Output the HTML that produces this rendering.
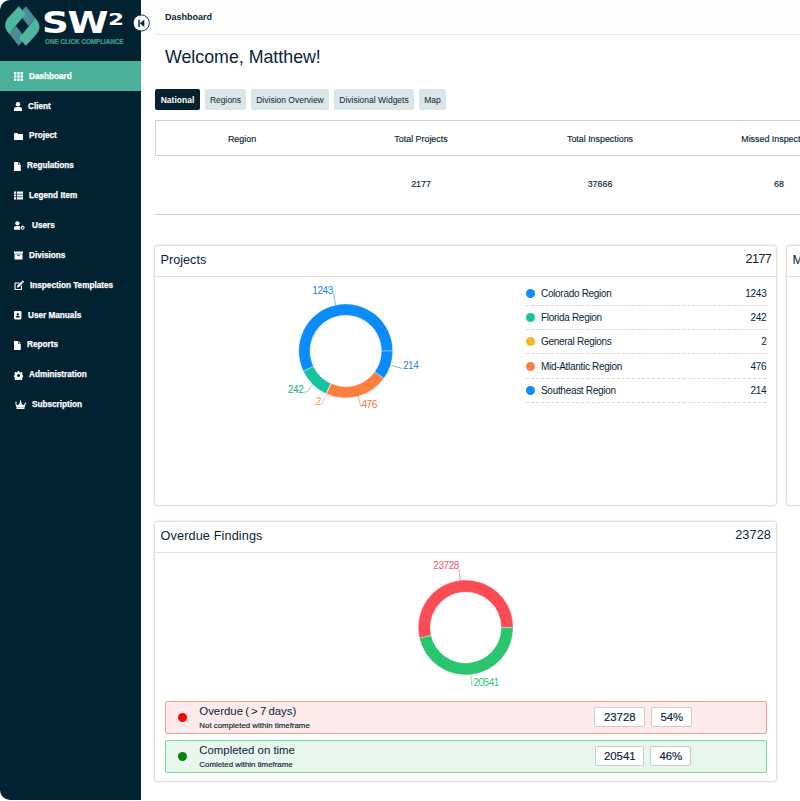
<!DOCTYPE html>
<html lang="en">
<head>
<meta charset="utf-8">
<title>Dashboard</title>
<style>
*{box-sizing:border-box;margin:0;padding:0}
html,body{width:800px;height:801px;overflow:hidden;background:#fff}
body{font-family:"Liberation Sans",sans-serif;color:#0b2434;position:relative}
.abs{position:absolute}
#side{position:absolute;left:0;top:0;width:141px;height:800px;background:#022232;border-radius:10px 0 0 10px}
#topbar{position:absolute;left:141px;top:0;width:659px;height:34px;background:#fefefd}
#topline{position:absolute;left:155px;top:34px;width:645px;height:1px;background:#e6e6e4}
.mi{position:absolute;left:0;width:141px;height:30px;color:#fff;font-weight:bold;font-size:8.200px;line-height:30px}
.mi.act{background:#4bb09a}
.mi span{position:absolute;top:.800px;white-space:nowrap;-webkit-text-stroke:.25px #fff}
.mi svg{position:absolute;left:14px;top:11px;width:9px;height:9px;fill:#fff}
.tab{position:absolute;top:89px;height:21px;background:#dbe6e8;border-radius:2px;font-size:8.5px;line-height:23px;text-align:center;color:#0b2434;white-space:nowrap}
.tab.on{background:#062230;color:#fff;font-weight:bold}
.th{position:absolute;font-size:8.900px;-webkit-text-stroke:.15px #0b2434;white-space:nowrap;transform:translateX(-50%);color:#0b2434}
.card{position:absolute;background:#fff;border-radius:3px;box-shadow:0 0 2px 1px rgba(0,0,0,.17)}
.card .hd{position:absolute;left:0;right:0;top:0;height:31.500px;border-bottom:1px solid #e4e4e4}
.card .hd .t{position:absolute;left:5.500px;top:0;line-height:28px;font-size:12.700px}
.card .hd .v{position:absolute;right:5px;top:0;line-height:27.400px;font-size:12.700px;letter-spacing:-.7px}
.lg{position:absolute;left:371px;width:240.400px;height:24px;border-bottom:1px dashed #d9d9d9;font-size:10px;letter-spacing:-.3px;line-height:24px}
.lg i{position:absolute;left:0;top:7px;width:9px;height:9px;border-radius:50%}
.lg b{position:absolute;left:15px;font-weight:normal}
.lg em{position:absolute;right:0;font-style:normal}

.row{position:absolute;left:10.300px;width:601.700px;height:33px;border:1px solid;border-radius:2px}
.row.red{background:#fdeaea;border-color:#ee9c9c}
.row.grn{background:#e8f7ee;border-color:#7dd6a2}
.row i{position:absolute;left:12px;top:11px;width:9px;height:9px;border-radius:50%}
.row.red i{background:#f00}
.row.grn i{background:#0a800a}
.row .a{position:absolute;left:33px;top:1px;font-size:11.400px;line-height:16px;white-space:nowrap}
.row .s{position:absolute;left:33px;top:19px;-webkit-text-stroke:.15px #0b2434;font-size:7.900px;line-height:10px;white-space:nowrap}
.row .bx{position:absolute;top:5px;height:20px;background:#fff;border:1px solid #ccc;border-radius:2px;font-size:11.400px;-webkit-text-stroke:.15px #0b2434;line-height:18px;text-align:center}
</style>
</head>
<body>
<div id="side">
  <svg class="abs" style="left:0;top:0" width="141" height="60" viewBox="0 0 141 60">
    <g>
      <polygon points="26,6.2 35.6,18.6 28.6,26 19,14" fill="#4a8d97"/>
      <polygon points="18.6,45.8 9,33.4 16,26 25.6,38" fill="#4a8d97"/>
      <path d="M18.8,6.2 L25.6,14.0 L9.1,33.8 C6.3,30.5 4.9,27.5 5.1,25.0 C5.3,21.5 7.0,19.0 9.2,16.6 Z" fill="#4db79f"/>
      <path d="M25.8,45.8 L19.0,38.0 L35.5,18.2 C38.3,21.5 39.7,24.5 39.5,27.0 C39.3,30.5 37.6,33.0 35.4,35.4 Z" fill="#4db79f"/>
    </g>
  </svg>
  <div class="abs" id="sw" style="left:42.300px;top:1.500px;font-family:'DejaVu Sans','Liberation Sans',sans-serif;font-size:31px;font-weight:bold;color:#fff;line-height:40px;transform-origin:0 0;transform:scaleX(1.2);white-space:nowrap;letter-spacing:-1px">SW</div>
  <div class="abs" id="sw2" style="left:108px;top:9.700px;font-family:'DejaVu Sans','Liberation Sans',sans-serif;font-size:15.400px;font-weight:bold;color:#fff;line-height:20px;transform-origin:0 0;transform:scaleX(1.5)">2</div>
  <div class="abs" id="tag" style="left:45px;top:36.500px;-webkit-text-stroke:.2px #3f9d8c;font-size:6.3px;font-weight:bold;color:#3f9d8c;line-height:10px;letter-spacing:0px;white-space:nowrap">ONE CLICK COMPLIANCE</div>

  <div class="mi act" style="top:61.00px;height:30.400px"><svg viewBox="0 0 9 9"><path d="M0,0h2.4v2.4h-2.4zM3.3,0h2.4v2.4h-2.4zM6.6,0h2.4v2.4h-2.4zM0,3.3h2.4v2.4h-2.4zM3.3,3.3h2.4v2.4h-2.4zM6.6,3.3h2.4v2.4h-2.4zM0,6.6h2.4v2.4h-2.4zM3.3,6.6h2.4v2.4h-2.4zM6.6,6.6h2.4v2.4h-2.4z"/></svg><span style="left:29px">Dashboard</span></div>
  <div class="mi" style="top:90.85px"><svg viewBox="0 0 9 9"><circle cx="4" cy="2.3" r="2.2"/><path d="M0,9 V7.4 C0,5.8 1.3,5 2.6,5 H5.4 C6.700,5 8,5.8 8,7.400 V9 Z"/></svg><span style="left:28px">Client</span></div>
  <div class="mi" style="top:120.70px"><svg viewBox="0 0 9 9"><path d="M0,1.800 C0,1.300 .4,1 .8,1 H3.200 L4.200,2 H8.200 C8.700,2 9,2.400 9,2.800 V7.200 C9,7.700 8.600,8 8.200,8 H.8 C.3,8 0,7.600 0,7.200 Z"/></svg><span style="left:29px">Project</span></div>
  <div class="mi" style="top:150.55px"><svg viewBox="0 0 9 9"><path d="M0,.6 C0,.3 .3,0 .6,0 H4 V2.500 C4,2.800 4.200,3 4.500,3 H6.800 V8.400 C6.800,8.700 6.500,9 6.200,9 H.6 C.3,9 0,8.700 0,8.400 Z M4.600,0 L6.800,2.400 H4.600 Z"/></svg><span style="left:27px">Regulations</span></div>
  <div class="mi" style="top:180.40px"><svg viewBox="0 0 9 9"><path d="M0,.5h2.200v2.200h-2.200zM3,.5h6v2.200h-6zM0,3.400h2.200v2.200h-2.200zM3,3.400h6v2.200h-6zM0,6.300h2.200v2.200h-2.200zM3,6.300h6v2.200h-6z"/></svg><span style="left:29px">Legend Item</span></div>
  <div class="mi" style="top:210.25px"><svg viewBox="0 0 9 9" style="left:12.600px;width:11px;overflow:visible"><circle cx="3.400" cy="2.300" r="2.150"/><path d="M0,8.700 V7.300 C0,5.800 1.100,5 2.300,5 H4.700 C5.300,5 5.700,5.100 6.100,5.400 C5.500,6.500 5.700,7.800 6.500,8.700 Z"/><path d="M8.500,4.500 l.5,.1 .2,.6 .6,-.2 .5,.5 -.2,.6 .6,.2 v.8 l-.6,.2 .2,.6 -.5,.5 -.6,-.2 -.2,.6 h-.8 l-.2,-.6 -.6,.2 -.5,-.5 .2,-.6 -.6,-.2 v-.8 l.6,-.2 -.2,-.6 .5,-.5 .6,.2 .2,-.6 z M8.700,6 a.8,.8 0 1 0 .01,0 Z" fill-rule="evenodd"/></svg><span style="left:32px">Users</span></div>
  <div class="mi" style="top:240.10px"><svg viewBox="0 0 9 9"><path d="M0,.5 h9 v2.200 h-9 z M.5,3.300 h8 v4.600 c0,.4 -.3,.6 -.6,.6 h-6.800 c-.4,0 -.6,-.3 -.6,-.6 z M3.200,4.200 v.8 h2.600 v-.8 z" fill-rule="evenodd"/></svg><span style="left:29px">Divisions</span></div>
  <div class="mi" style="top:269.95px"><svg viewBox="0 0 9 9" style="width:10px;overflow:visible"><path d="M6.800,.6 l1.600,1.600 -4,4 -2,.4 .4,-2 z M8.800,1.800 l-1.600,-1.600 .5,-.5 c.3,-.3 .7,-.3 1,0 l.6,.6 c.3,.3 .3,.7 0,1 z"/><path d="M1,1.500 H5 V2.600 H1.400 C1.200,2.600 1.100,2.700 1.100,2.900 V7.600 C1.100,7.800 1.200,7.900 1.400,7.900 H6.100 C6.300,7.900 6.400,7.800 6.400,7.600 V5.300 L7.500,4.200 V8 C7.500,8.600 7.100,9 6.500,9 H1 C.4,9 0,8.600 0,8 V2.500 C0,1.900 .4,1.500 1,1.500 Z"/></svg><span style="left:30px">Inspection Templates</span></div>
  <div class="mi" style="top:299.80px"><svg viewBox="0 0 9 9" style="top:11.500px;height:8.400px;width:8.400px"><path d="M1.300,0 H6.700 C7.400,0 8,.6 8,1.300 V7.700 C8,8.400 7.400,9 6.700,9 H1.300 C.6,9 0,8.400 0,7.700 V1.300 C0,.6 .6,0 1.300,0 Z M4,2.200 a1.300,1.300 0 1 0 .01,0 Z M1.700,7 H6.300 C6.300,5.700 5.300,5.200 4,5.200 C2.700,5.200 1.700,5.700 1.700,7 Z" fill-rule="evenodd"/></svg><span style="left:28px">User Manuals</span></div>
  <div class="mi" style="top:329.65px"><svg viewBox="0 0 9 9"><path d="M0,.6 C0,.3 .3,0 .6,0 H4 V2.500 C4,2.800 4.200,3 4.500,3 H6.800 V8.400 C6.800,8.700 6.500,9 6.200,9 H.6 C.3,9 0,8.700 0,8.400 Z M4.600,0 L6.800,2.400 H4.600 Z"/></svg><span style="left:27px">Reports</span></div>
  <div class="mi" style="top:359.50px"><svg viewBox="0 0 9 9"><path d="M3.700,0 h1.600 l.3,1.200 .8,.4 1.100,-.6 1.100,1.100 -.6,1.100 .4,.8 1.200,.3 v1.600 l-1.200,.3 -.4,.8 .6,1.100 -1.100,1.100 -1.100,-.6 -.8,.4 -.3,1.200 h-1.600 l-.3,-1.200 -.8,-.4 -1.100,.6 -1.100,-1.100 .6,-1.100 -.4,-.8 -1.200,-.3 v-1.600 l1.200,-.3 .4,-.8 -.6,-1.100 1.100,-1.100 1.100,.6 .8,-.4 z M4.500,3 a1.500,1.500 0 1 0 .01,0 Z" fill-rule="evenodd"/></svg><span style="left:29px">Administration</span></div>
  <div class="mi" style="top:389.35px"><svg viewBox="0 0 9 9" style="width:11px;overflow:visible"><path d="M1.500,8 h8 v1 h-8 z M.4,2.600 a.7,.7 0 1 1 .6,.6 l1.200,2 1.900,-1 1,-2.600 a.7,.7 0 1 1 .8,0 l1,2.600 1.900,1 1.200,-2 a.7,.7 0 1 1 .6,.6 l-1.100,4 h-8 l-1.100,-4 z"/></svg><span style="left:32px">Subscription</span></div>
</div>
<div id="topbar"></div>
<div id="topline"></div>
<svg class="abs" style="left:131px;top:13px" width="20" height="20" viewBox="0 0 20 20"><circle cx="10.250" cy="10" r="8.100" fill="#fff" stroke="#022232" stroke-width=".9"/><path d="M7.300,6.700h1.500v7.300h-1.500z M13.300,6.700 v7.300 l-4.500,-3.650 z" fill="#0b2434"/></svg>
<div class="abs" id="bc" style="left:165px;top:10.600px;font-size:9px;font-weight:bold;line-height:12px">Dashboard</div>
<div class="abs" id="wel" style="left:165px;top:44px;font-size:17.800px;line-height:26px;white-space:nowrap">Welcome, Matthew!</div>

<div class="tab on" style="left:155px;width:45px">National</div>
<div class="tab" style="left:205px;width:41px">Regions</div>
<div class="tab" style="left:251px;width:78px">Division Overview</div>
<div class="tab" style="left:334px;width:80px">Divisional Widgets</div>
<div class="tab" style="left:419px;width:27px">Map</div>

<div class="abs" style="left:155px;top:120px;width:660px;height:35.500px;border:1px solid #c8d1d3"></div>
<div class="abs" style="left:155px;top:214px;width:660px;height:1px;background:#c8d1d3"></div>
<div class="th" style="left:242px;top:134px">Region</div>
<div class="th" style="left:421px;top:134px">Total Projects</div>
<div class="th" style="left:600px;top:134px">Total Inspections</div>
<div class="th" style="left:779px;top:134px">Missed Inspections</div>
<div class="th" style="left:421px;top:179px">2177</div>
<div class="th" style="left:600px;top:179px">37666</div>
<div class="th" style="left:779px;top:179px">68</div>

<div class="card" style="left:155px;top:245.500px;width:621px;height:259.500px">
  <div class="hd"><div class="t">Projects</div><div class="v">2177</div></div>
  <div class="lg" style="top:36px"><i style="background:#0b8bfc"></i><b>Colorado Region</b><em>1243</em></div>
  <div class="lg" style="top:60.400px"><i style="background:#17c39a"></i><b>Florida Region</b><em>242</em></div>
  <div class="lg" style="top:84.800px"><i style="background:#f9b82c"></i><b>General Regions</b><em>2</em></div>
  <div class="lg" style="top:109.200px"><i style="background:#fc7f40"></i><b>Mid-Atlantic Region</b><em>476</em></div>
  <div class="lg" style="top:133.600px"><i style="background:#0b8bfc"></i><b>Southeast Region</b><em>214</em></div>
</div>
<div class="card" style="left:787px;top:245.500px;width:621px;height:259.500px">
  <div class="hd"><div class="t">Missed Inspections</div></div>
</div>
<div class="card" style="left:155px;top:521.500px;width:621px;height:259.500px">
  <div class="hd"><div class="t" style="letter-spacing:.12px">Overdue Findings</div><div class="v" style="letter-spacing:.1px">23728</div></div>
  <div class="row red" style="top:179px">
    <i></i><div class="a" style="word-spacing:-1px">Overdue ( &gt; 7 days)</div><div class="s">Not completed within timeframe</div>
    <div class="bx" style="left:428px;width:51px">23728</div><div class="bx" style="left:485px;width:41px">54%</div>
  </div>
  <div class="row grn" style="top:218px">
    <i></i><div class="a">Completed on time</div><div class="s">Comleted within timeframe</div>
    <div class="bx" style="left:428.700px;width:49.500px">20541</div><div class="bx" style="left:484px;width:41px">46%</div>
  </div>
</div>

<svg class="abs" style="left:0;top:0;pointer-events:none" width="800" height="801" viewBox="0 0 800 801" font-family="Liberation Sans, sans-serif" font-size="10" letter-spacing="-.45">
<path d="M392.70,351.00 A47,47 0 1 0 303.30,371.27 L313.49,366.40 A35.7,35.7 0 1 1 381.40,351.00 Z" fill="#0b8bfc" stroke="#fff" stroke-opacity=".6" stroke-width=".6"/>
<path d="M303.30,371.27 A47,47 0 0 0 326.26,393.79 L330.93,383.50 A35.7,35.7 0 0 1 313.49,366.40 Z" fill="#17c39a" stroke="#fff" stroke-opacity=".6" stroke-width=".6"/>
<path d="M326.26,393.79 A47,47 0 0 0 326.51,393.90 L331.12,383.59 A35.7,35.7 0 0 1 330.93,383.50 Z" fill="#f6b23c" stroke="#fff" stroke-opacity=".6" stroke-width=".6"/>
<path d="M326.51,393.90 A47,47 0 0 0 384.02,378.22 L374.80,371.67 A35.7,35.7 0 0 1 331.12,383.59 Z" fill="#fc7f40" stroke="#fff" stroke-opacity=".6" stroke-width=".6"/>
<path d="M384.02,378.22 A47,47 0 0 0 392.70,351.00 L381.40,351.00 A35.7,35.7 0 0 1 374.80,371.67 Z" fill="#0b8bfc" stroke="#fff" stroke-opacity=".6" stroke-width=".6"/>
<g fill="none" stroke-width=".7" stroke-opacity=".85">
<path d="M333.500,293.500 L335.600,305" stroke="#0b8bfc"/>
<path d="M391.500,365.500 L402,368.500" stroke="#0b8bfc"/>
<path d="M304,392 H307 L312.500,384.500" stroke="#17c39a"/>
<path d="M321.500,404.500 L327,393.500" stroke="#f6b23c"/>
<path d="M358,396 L361,407" stroke="#fc7f40"/>
<path d="M458.800,569 L460.500,580.500" stroke="#fb4c56"/>
<path d="M470.700,675 L472,686" stroke="#2bc56f"/>
</g>
<text x="312.300" y="293.600" fill="#1f82ea">1243</text>
<text x="403" y="369" fill="#1f82ea">214</text>
<text x="288" y="393.200" fill="#14b08a">242</text>
<text x="315.800" y="405" fill="#eda62f">2</text>
<text x="361.500" y="407.600" fill="#ee743a">476</text>
<path d="M513.20,627.50 A47.5,47.5 0 1 0 419.41,638.15 L431.10,635.46 A35.5,35.5 0 1 1 501.20,627.50 Z" fill="#fb4c56" stroke="#fff" stroke-opacity=".6" stroke-width=".6"/>
<path d="M419.41,638.15 A47.5,47.5 0 0 0 513.20,627.50 L501.20,627.50 A35.5,35.5 0 0 1 431.10,635.46 Z" fill="#2bc56f" stroke="#fff" stroke-opacity=".6" stroke-width=".6"/>
<text x="433.300" y="568.800" fill="#e85a64">23728</text>
<text x="473.400" y="685.800" fill="#2bc56f">20541</text>
</svg>
</body>
</html>
